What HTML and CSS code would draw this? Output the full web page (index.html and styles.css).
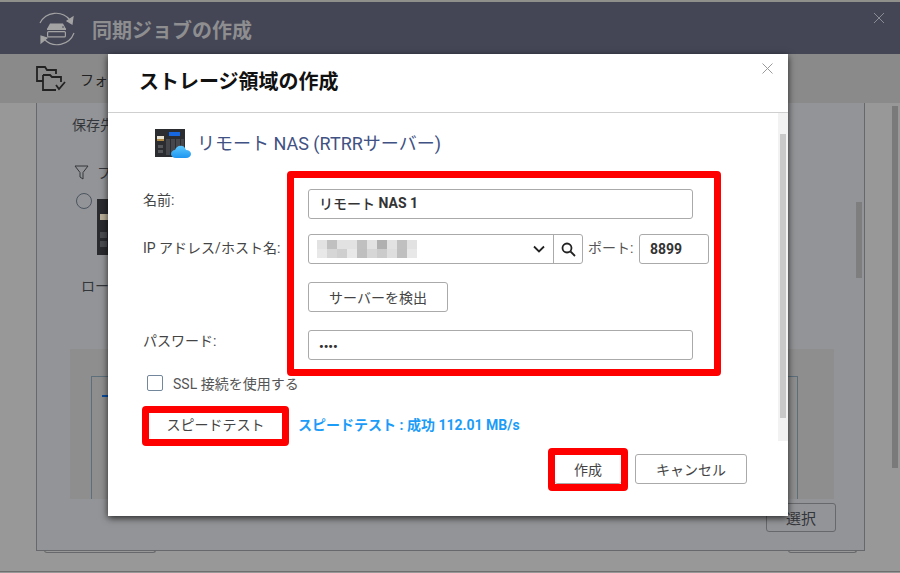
FILE: index.html
```html
<!DOCTYPE html>
<html lang="ja">
<head>
<meta charset="utf-8">
<title>ストレージ領域の作成</title>
<link rel="stylesheet" href="styles.css">
</head>
<body>
<div class="app">
  <div class="topline"></div>
  <header class="job-head">
    <svg class="job-icon" width="38" height="36" viewBox="0 0 38 36" fill="none" stroke="#a3a3a3" stroke-width="1.200">
      <path d="M2 11A18 18 0 0 1 32 8"/>
      <path d="M36 21A18 18 0 0 1 6 27"/>
      <path d="M35 5l-1 7-5-3z" fill="#a3a3a3"/>
      <path d="M3 31l0-7 6 2z" fill="#a3a3a3"/>
      <path d="M9 17l3-5.500h13l3 5.500z" fill="#a3a3a3" stroke="none"/>
      <path d="M9 16.500h19v1.500H9z" fill="#a3a3a3" stroke="none"/>
      <rect x="9.600" y="19.600" width="17.800" height="5.300" rx="1" stroke-width="1.200"/>
      <path d="M24 15h2M24 22h2" stroke="#444656" stroke-width="1"/>
    </svg>
    <h1 class="job-title">同期ジョブの作成</h1>
    <svg class="job-close" width="12" height="12" viewBox="0 0 12 12" stroke="#8a8b93"><path d="M1 1l10 10M11 1L1 11"/></svg>
  </header>
  <div class="toolbar">
    <svg width="31" height="26" viewBox="0 0 31 26" fill="none" stroke="#222" stroke-width="1.800">
      <path d="M7 15H1V1h8l2 3h9v4"/>
      <path d="M7 9h7l2 2h9v5M20 24H7V9"/>
      <path d="M20 19l3 4 6-7"/>
    </svg>
    <span class="toolbar-text">フォルダ</span>
  </div>
  <main class="panel">
    <div class="panel-body">
      <p class="dest">保存先</p>
      <div class="filter">
        <svg width="15" height="15" viewBox="0 0 15 15" fill="none" stroke="#33363b"><path d="M1 1h13L9 7.500V14l-3-2V7.500z"/></svg>
        <span>フィルタ</span>
      </div>
      <div class="choice">
        <span class="radio"></span>
        <svg class="mini-nas" width="30" height="56" viewBox="0 0 30 56">
          <rect width="30" height="56" fill="#2a2b2f"/>
          <rect x="3" y="15" width="8" height="6" fill="#b8ad96"/>
          <rect x="3" y="33" width="7" height="6" fill="#4a4b4f"/>
          <rect x="3" y="42" width="7" height="6" fill="#4a4b4f"/>
        </svg>
      </div>
      <p class="local">ローカル</p>
      <div class="tree-band">
        <div class="tree-box"><span class="tree-tick"></span></div>
      </div>
    </div>
    <div class="panel-foot"><button class="ghost-btn">選択</button></div>
    <div class="panel-bar"></div>
    <div class="peek peek-left"></div>
    <div class="peek peek-right"></div>
  </main>
  <div class="page-bar"></div>
  <div class="baseline"></div>
</div>

<section class="modal">
  <header class="modal-head">
    <h2 class="modal-title">ストレージ領域の作成</h2>
    <svg class="modal-close" width="11" height="11" viewBox="0 0 11 11" stroke="#9a9a9a"><path d="M.5.5l10 10M10.500.5l-10 10"/></svg>
  </header>
  <div class="modal-scroll">
    <div class="modal-content">
      <div class="nas-title">
        <svg width="37" height="31" viewBox="0 0 37 31">
          <defs><linearGradient id="cloud" x1="0" y1="0" x2="0" y2="1"><stop offset="0" stop-color="#5cc8ff"/><stop offset="1" stop-color="#1f96f0"/></linearGradient></defs>
          <rect x="0" y="1" width="30" height="28" fill="#2b2c30"/>
          <rect x="14" y="4" width="11" height="4" fill="#1768e0"/>
          <rect x="2" y="8" width="7" height="5" fill="#e8e2d2"/>
          <rect x="2" y="11" width="7" height="2" fill="#b08a44"/>
          <rect x="3" y="17" width="5" height="3" fill="#55565a"/>
          <rect x="3" y="22" width="5" height="3" fill="#55565a"/>
          <path d="M11 11h4v16h-4zM16 11h4v16h-4zM21 11h4v16h-4zM26 11h3v16h-3z" fill="#46474c"/>
          <path d="M21 30c-3 0-5-2-5-4s2-4 4-4c1-3 4-5 7-4 2 0 3 2 4 4 3 0 5 2 5 4s-2 4-5 4z" fill="url(#cloud)"/>
        </svg>
        <span class="nas-text">リモート NAS (RTRRサーバー)</span>
      </div>
      <form class="form">
        <div class="row row-name">
          <label class="label label-name">名前:</label>
          <div class="field wide strong"><span class="plain">リモート</span>&nbsp;NAS 1</div>
        </div>
        <div class="row row-ip">
          <label class="label label-ip">IP アドレス/ホスト名:</label>
          <div class="field ip-field">
            <svg class="pixels" width="100" height="18" viewBox="0 0 100 18">
              <g fill="#e2e2e2"><rect width="10" height="9"/><rect x="20" width="20" height="9"/><rect x="50" width="10" height="9"/><rect x="70" width="10" height="9"/><rect x="90" width="10" height="9"/></g>
              <g fill="#c0c0c0"><rect x="10" width="10" height="9"/><rect x="40" width="10" height="9"/><rect x="60" width="10" height="9" fill="#b0b0b0"/><rect x="80" width="10" height="9"/></g>
              <g fill="#e8e8e8"><rect y="9" width="10" height="9"/><rect x="30" y="9" width="10" height="9"/><rect x="90" y="9" width="10" height="9"/></g>
              <g fill="#d6d6d6"><rect x="10" y="9" width="10" height="9"/><rect x="20" y="9" width="10" height="9" fill="#cfcfcf"/><rect x="50" y="9" width="10" height="9"/><rect x="60" y="9" width="10" height="9" fill="#cbcbcb"/><rect x="70" y="9" width="10" height="9" fill="#dedede"/></g>
              <g fill="#bfbfbf"><rect x="40" y="9" width="10" height="9"/><rect x="80" y="9" width="10" height="9"/></g>
            </svg>
            <svg class="chev" width="12" height="8" viewBox="0 0 12 8" fill="none" stroke="#222" stroke-width="1.800"><path d="M1 1.500l5 5 5-5"/></svg>
            <span class="search-cell">
              <svg width="15" height="15" viewBox="0 0 15 15" fill="none" stroke="#222" stroke-width="1.800"><circle cx="6" cy="6" r="4.500"/><path d="M9.500 9.500l4.500 4.500"/></svg>
            </span>
          </div>
          <span class="port-label">ポート:</span>
          <div class="field port strong">8899</div>
        </div>
        <div class="row row-find">
          <span class="label"></span>
          <button type="button" class="btn find">サーバーを検出</button>
        </div>
        <div class="row row-pass">
          <label class="label label-pass">パスワード:</label>
          <div class="field wide strong pass">••••</div>
        </div>
      </form>
      <div class="ssl">
        <span class="check"></span>
        <span>SSL 接続を使用する</span>
      </div>
      <div class="speed">
        <button type="button" class="btn speed-btn">スピードテスト</button>
        <span class="speed-ok">スピードテスト : 成功 112.01 MB/s</span>
      </div>
    </div>
    <div class="scrollbar"><div class="thumb"></div></div>
  </div>
  <footer class="modal-foot">
    <button type="button" class="btn create">作成</button>
    <button type="button" class="btn cancel">キャンセル</button>
  </footer>
</section>

<div class="mark mark-form"></div>
<div class="mark mark-speed"></div>
<div class="mark mark-create"></div>
</body>
</html>
```
FILE: styles.css
```css
* { box-sizing: border-box; }
html, body { margin: 0; height: 100%; overflow: hidden; }
body {
  font-family: Roboto, "Noto Sans CJK JP", sans-serif;
  font-size: 14px;
  color: #444;
  background: #989898;
}
h1, h2, p { margin: 0; }
button { font: inherit; }

.app { height: 573px; display: flex; flex-direction: column; position: relative; }
.topline { height: 2px; background: #8f8f8c; }
.job-head {
  height: 52px; background: #444656;
  display: flex; align-items: center; padding: 0 15px 0 38px;
}
.job-title { margin: 5px 0 0 16px; font-size: 20px; font-weight: 700; color: #8e8e90; line-height: 1; }
.job-close { margin-left: auto; margin-top: -20px; }
.job-icon { margin-top: 4px; }

.toolbar {
  height: 49px; background: #8a8a8a;
  display: flex; align-items: center; padding-left: 36px; gap: 13px;
}
.toolbar-text { color: #222; font-size: 14px; }

.panel {
  position: relative; height: 448px; margin: 0 35px 0 36px;
  background: #939497;
  border: 1px solid #66686b; border-top: 0;
  display: flex; flex-direction: column;
}
.panel-body { height: 396px; padding: 11px 0 0 35px; background: #939497; color: #33363b; }
.dest { line-height: 22px; }
.filter { display: flex; align-items: center; gap: 8px; margin: 25px 0 0 2px; height: 22px; }
.choice { display: flex; gap: 5px; margin: 6px 0 0 4px; height: 64px; }
.radio { width: 16px; height: 16px; border: 1px solid #4b5560; border-radius: 50%; margin-top: 4px; }
.mini-nas { margin-top: 10px; flex: none; }
.local { margin: 22px 0 0 9px; line-height: 22px; }
.tree-band {
  width: 764px; height: 150px;
  background: #8e8e8e; padding: 27px 36px 0 21px;
  position: absolute; left: 33px; top: 246px;
}
.tree-box { height: 123px; border: 1px solid #5c6f7b; border-bottom: 0; padding: 18px 0 0 10px; }
.tree-tick { display: block; width: 12px; height: 2px; background: #0a4ea0; }

.panel-foot { height: 52px; padding: 5px 28px 0 0; display: flex; justify-content: flex-end; }
.ghost-btn {
  width: 70px; height: 29px; background: transparent;
  border: 1px solid #66686b; border-radius: 3px; color: #33363b; font-size: 15px; padding: 0;
}
.panel-bar { position: absolute; right: 2px; top: 99px; width: 6px; height: 76px; background: #7e7e7e; }
.peek { position: absolute; top: 447px; height: 3px; border: 1px solid #66686b; border-top: 0; border-radius: 0 0 3px 3px; }
.peek-left { left: 7px; width: 112px; }
.peek-right { left: 751px; width: 69px; }
.page-bar { position: absolute; left: 892px; top: 106px; width: 6px; height: 362px; background: #7a7a7a; }
.baseline { margin-top: 20px; height: 1px; background: #6e6e6e; }

.modal {
  position: absolute; left: 108px; top: 54px; width: 680px; height: 462px;
  background: #fff; box-shadow: 0 2px 7px rgba(0,0,0,.75);
  display: flex; flex-direction: column;
}
.modal-head {
  height: 59px; border-bottom: 1px solid #cfcfcf;
  display: flex; align-items: center; justify-content: space-between;
  padding: 0 15px 0 31px; flex: none;
}
.modal-title { font-size: 20px; font-weight: 700; color: #111; line-height: 1; margin-top: -3px; }
.modal-close { margin-top: -29px; }
.modal-scroll { height: 328px; display: flex; flex: none; }
.modal-content { flex: 1; padding: 15px 0 0 35px; }
.scrollbar { width: 10px; background: #f2f2f2; padding: 21px 2px 0; }
.thumb { height: 284px; background: #c9c9c9; }

.nas-title {
  display: flex; align-items: center; gap: 5px; height: 31px; padding-left: 12px;
  font-size: 18px; color: #3f5283;
}
.nas-text { margin-top: -4px; }
.form { margin-top: 30px; }
.row { display: flex; align-items: flex-start; height: 30px; }
.row-ip { margin-top: 15px; }
.row-find { margin-top: 18px; }
.row-pass { margin-top: 18px; }
.label { width: 165px; flex: none; color: #444; line-height: 22px; }
.label-ip { padding-top: 3px; }
.field {
  height: 30px; border: 1px solid #aaa; border-radius: 3px; background: #fff;
  display: flex; align-items: center; padding-left: 10px; color: #333;
}
.wide { width: 385px; }
.strong { font-weight: 700; font-size: 14px; }
.plain { font-weight: 500; }
.row-name .field { padding-bottom: 2px; }
.pass { font-size: 13px; padding-top: 2px; }
.ip-field { width: 275px; padding-left: 8px; }
.pixels { flex: none; }
.chev { margin-left: auto; margin-right: 8px; }
.search-cell {
  width: 29px; height: 28px; border-left: 1px solid #aaa;
  display: flex; align-items: center; justify-content: center;
}
.port-label { width: 56px; padding-left: 5px; line-height: 28px; color: #555; }
.port { width: 70px; padding-left: 10px; }
.btn {
  height: 30px; background: #fff; border: 1px solid #aaa; border-radius: 3px;
  color: #444; padding: 0; font-size: 14px;
}
.find { width: 140px; }
.ssl { display: flex; align-items: center; gap: 10px; margin: 12px 0 0 4px; height: 22px; color: #555; }
.check { width: 16px; height: 16px; border: 1px solid #73879c; border-radius: 2px; }
.speed { display: flex; align-items: center; margin: 15px 0 0 6px; gap: 16px; height: 30px; }
.speed-btn { width: 133px; border: 0; }
.speed-ok { color: #1b9cf8; font-weight: 700; font-size: 14px; }

.modal-foot { flex: none; display: flex; gap: 14px; padding: 13px 0 0 447px; }
.create { width: 66px; border: 0; border-bottom: 1px solid #aaa; }
.cancel { width: 112px; }

.mark { position: absolute; border: 7px solid #fe0000; border-radius: 4px; }
.mark-form { left: 287px; top: 171px; width: 434px; height: 205px; }
.mark-speed { left: 142px; top: 406px; width: 147px; height: 40px; }
.mark-create { left: 548px; top: 448px; width: 80px; height: 43px; }
```
